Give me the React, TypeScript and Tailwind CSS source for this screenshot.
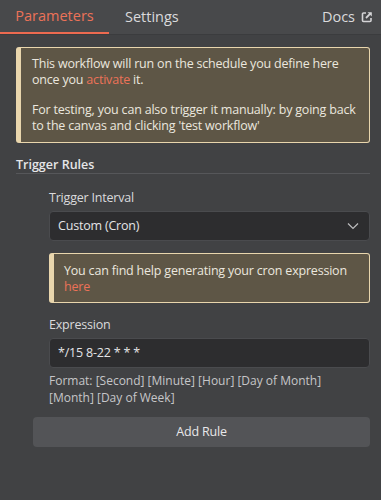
import React from "react";

function ExtIcon() {
  return (
    <svg width="12" height="12" viewBox="0 0 12 12" fill="none">
      <path d="M5 2H2.5A1 1 0 0 0 1.5 3v6.5a1 1 0 0 0 1 1H9a1 1 0 0 0 1-1V7" stroke="#d4d4d6" strokeWidth="1.6" />
      <path d="M6.5 1.2h4.3v4.3z" fill="#d4d4d6" />
      <path d="M9.8 2.2 5 7" stroke="#d4d4d6" strokeWidth="1.8" />
    </svg>
  );
}

function Chevron() {
  return (
    <svg width="12" height="8" viewBox="0 0 12 8" fill="none">
      <path d="M1 1.5l5 5 5-5" stroke="#bdbdbf" strokeWidth="1.2" />
    </svg>
  );
}

export default function App() {
  return (
    <div
      className="w-[381px] h-[500px] bg-[#414244] text-[#dcdcde] overflow-hidden"
      style={{ fontFamily: '"Open Sans", sans-serif' }}
    >
      <div className="h-[35px] bg-[#48494b] border-b border-[#3b3c3e] flex items-stretch">
        <div className="w-[109px] flex items-center justify-center text-[14.5px] font-medium text-[#ec7258] border-b-2 border-[#ec6a50]">
          Parameters
        </div>
        <div className="ml-[16px] flex items-center text-[14.5px] font-medium text-[#dadadc]">
          Settings
        </div>
        <div className="ml-auto mr-[8px] flex items-center gap-[6px] text-[14.5px] font-medium text-[#dadadc]">
          Docs
          <ExtIcon />
        </div>
      </div>

      <div className="pl-[16px] pr-[11px] pt-[12px] text-[12.5px] tracking-[-0.2px]">
        <div className="rounded-[3px] border border-[#e9d6ad] border-l-[5px] bg-[#5e5646] pl-[11px] pr-[4px] pt-[8px] pb-[9px] leading-[15.5px] text-[#ebe7df]">
          <p>
            This workflow will run on the schedule you define here once you{" "}
            <span className="text-[#ec7258]">activate</span> it.
          </p>
          <p className="mt-[15px]">
            For testing, you can also trigger it manually: by going back to the
            canvas and clicking 'test workflow'
          </p>
        </div>

        <div className="mt-[14px] leading-[16px] border-b border-[#56575a] font-semibold text-[#e6e6e8] tracking-normal">
          Trigger Rules
        </div>

        <div className="pl-[33px] pt-[16px]">
          <div className="leading-[16px] text-[#dadadc]">Trigger Interval</div>
          <div className="mt-[5px] h-[30px] rounded-[4px] border border-[#4a4b4e] bg-[#2d2d2f] flex items-center justify-between pl-[8px] pr-[10px] text-[#e4e4e6]">
            <span>Custom (Cron)</span>
            <Chevron />
          </div>

          <div className="mt-[12px] rounded-[3px] border border-[#e9d6ad] border-l-[5px] bg-[#5e5646] pl-[10px] pr-[6px] pt-[9px] pb-[8px] leading-[15.5px] text-[#ebe7df]">
            You can find help generating your cron expression{" "}
            <span className="text-[#ec7258] font-medium">here</span>
          </div>

          <div className="mt-[14px] leading-[16px] text-[#dadadc]">Expression</div>
          <div className="mt-[5px] h-[30px] rounded-[4px] border border-[#4a4b4e] bg-[#2d2d2f] flex items-center pl-[8px] text-[#e4e4e6]">
            */15 8-22 * * *
          </div>
          <div className="mt-[4px] text-[12px] tracking-normal leading-[17px] text-[#c6c6c8]">
            Format: [Second] [Minute] [Hour] [Day of Month]
            <br />
            [Month] [Day of Week]
          </div>
        </div>

        <div className="ml-[17px] mt-[11px] h-[30px] rounded-[4px] bg-[#535457] flex items-center justify-center text-[#e8e8ea]">
          Add Rule
        </div>
      </div>
    </div>
  );
}
